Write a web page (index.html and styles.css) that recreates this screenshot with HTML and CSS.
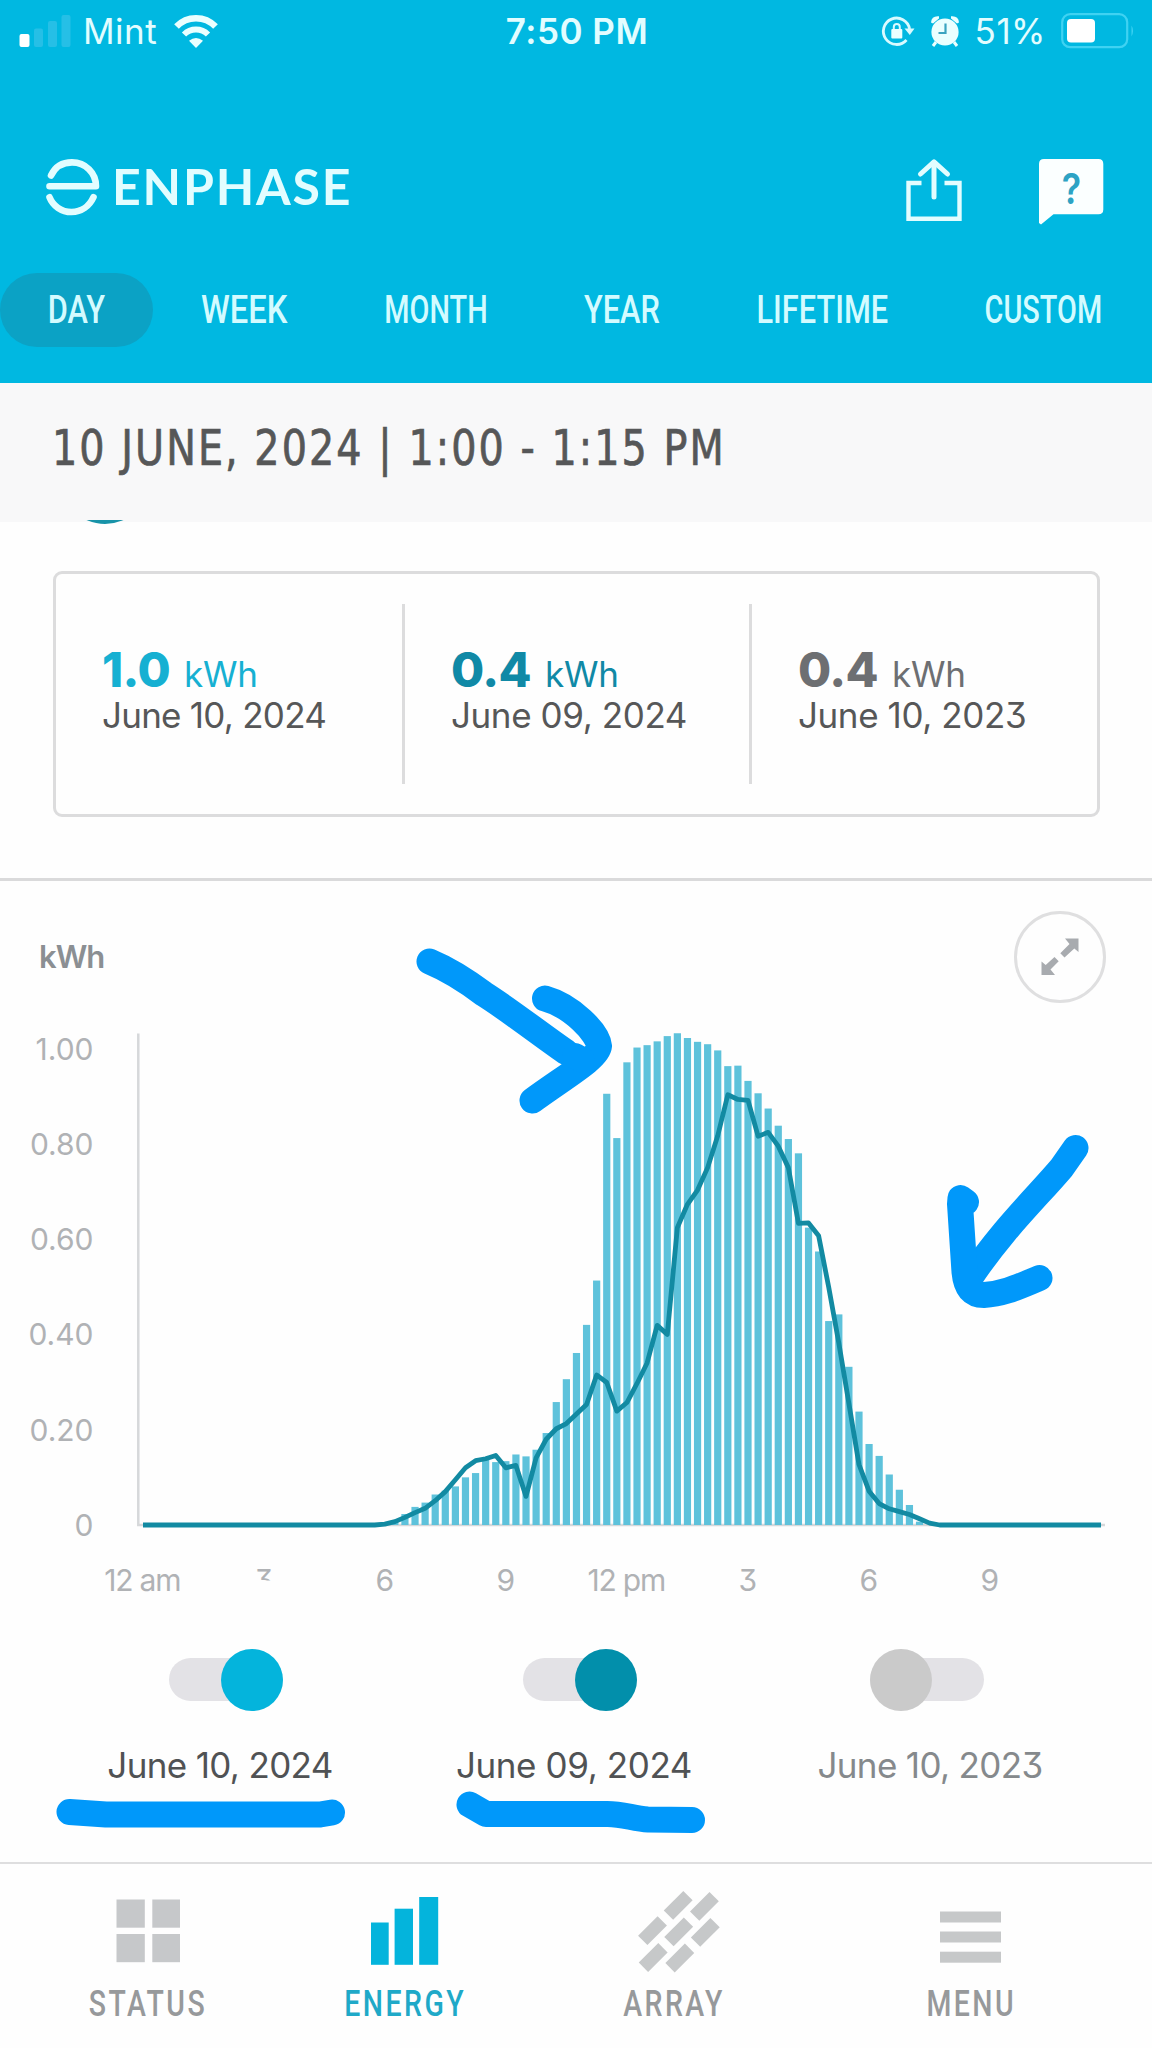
FILE: index.html
```html
<!DOCTYPE html>
<html lang="en">
<head>
    <meta charset="UTF-8">
    <title>Enphase Energy</title>
    <link rel="stylesheet" href="styles.css">
</head>
<body>
    <!-- Header -->
    <header class="header">
        <div class="status-bar">
            <div class="status-left">
                <svg class="signal" width="52" height="34" viewBox="0 0 52 34">
                    <rect x="0.5" y="20" width="10" height="13" rx="2" fill="#fff"/>
                    <rect x="15" y="14.5" width="9" height="18.5" rx="2" fill="#26bfe6"/>
                    <rect x="29" y="7" width="9" height="26" rx="2" fill="#26bfe6"/>
                    <rect x="42.5" y="1" width="9" height="32" rx="2" fill="#26bfe6"/>
                </svg>
                <span class="carrier">Mint</span>
                <svg class="wifi" width="46" height="36" viewBox="0 0 46 36">
                    <path d="M3.5 13.5 A27 27 0 0 1 42.5 13.5" fill="none" stroke="#eaffff" stroke-width="6.5"/>
                    <path d="M11 21.5 A17 17 0 0 1 35 21.5" fill="none" stroke="#eaffff" stroke-width="6"/>
                    <path d="M23 35 L16 27.8 Q23 22 30 27.8 Z" fill="#eaffff"/>
                </svg>
            </div>
            <span class="time">7:50 PM</span>
            <div class="status-right">
                <svg width="33" height="32" viewBox="0 0 33 32">
                    <path d="M24.5 25 A13.2 13.2 0 1 1 27.6 14" fill="none" stroke="#d8faff" stroke-width="2.8"/>
                    <path d="M22.5 13.5 H32.5 L27.8 20 Z" fill="#d8faff"/>
                    <rect x="9.3" y="14" width="11" height="9.5" rx="1" fill="#eaffff"/>
                    <path d="M11.8 14 V12 A3 3 0 0 1 17.8 12 V14" fill="none" stroke="#d8faff" stroke-width="2"/>
                </svg>
                <svg class="alarm" width="30" height="32" viewBox="0 0 30 32">
                    <circle cx="15" cy="17" r="13.6" fill="#eaffff"/>
                    <path d="M1 7.5 Q1.5 0.5 9 1.2 L9 3.5 L3 8.5 Z" fill="#eaffff"/>
                    <path d="M29 7.5 Q28.5 0.5 21 1.2 L21 3.5 L27 8.5 Z" fill="#eaffff"/>
                    <path d="M6 27 L3 31 M24 27 L27 31" stroke="#eaffff" stroke-width="3"/>
                    <path d="M15.5 8.5 V18 H8.5" fill="none" stroke="#3ba4c0" stroke-width="2.2"/>
                </svg>
                <span class="percent">51%</span>
                <svg width="74" height="36" viewBox="0 0 74 36">
                    <rect x="1.2" y="1.2" width="65" height="33" rx="8" fill="none" stroke="#3fd2f2" stroke-width="2.2"/>
                    <rect x="6" y="6" width="28" height="23.5" rx="4" fill="#fff"/>
                    <path d="M70.5 12.5 Q73.5 17.5 70.5 23.5 Z" fill="#3fd2f2"/>
                </svg>
            </div>
        </div>

        <div class="brand-row">
            <svg width="56" height="58" viewBox="0 0 56 58">
                <g fill="none" stroke="#e2fdff" stroke-width="6.6" stroke-linecap="round" stroke-linejoin="round">
                    <path d="M6 16.5 C10 8 17.5 3.4 27 3.4 C40.5 3.4 51 14 51 27.2 H4.5"/>
                    <path d="M4.5 38.2 C8 47 16.5 53 26.5 53 C36.5 53 44.5 47 48.5 38.2"/>
                </g>
            </svg>
            <span class="brand-name">ENPHASE</span>
            <svg class="share" width="56" height="64" viewBox="0 0 56 64">
                <g fill="none" stroke="#e2fdff" stroke-width="4.4">
                    <path d="M15.5 24 H2.5 V59.7 H53.5 V24 H38.5"/>
                    <path d="M28 4 V38" stroke-linecap="round" stroke-width="5"/>
                    <path d="M14.5 15 L28 2.8 L41.5 15" stroke-linecap="round" stroke-linejoin="round" stroke-width="5"/>
                </g>
            </svg>
            <div class="help">
                <svg width="65" height="66" viewBox="0 0 65 66">
                    <path d="M5 0 H59.5 Q64.3 0 64.3 5 V50.5 Q64.3 55.3 59.5 55.3 H14.5 L2 65.5 L0 64 V5 Q0 0 5 0 Z" fill="#fbffff"/>
                </svg>
                <span class="help-mark">?</span>
            </div>
        </div>

        <nav class="tabs">
            <a class="tab active"><span>DAY</span></a>
            <a class="tab wide"><span>WEEK</span></a>
            <a class="tab narrow"><span>MONTH</span></a>
            <a class="tab"><span>YEAR</span></a>
            <a class="tab"><span>LIFETIME</span></a>
            <a class="tab narrow"><span>CUSTOM</span></a>
        </nav>
    </header>

    <div class="period"><span>10 JUNE, 2024 | 1:00 - 1:15 PM</span></div>

    <!-- Scrolled content, the badge is cut off by the period bar -->
    <div class="badge-strip"><div class="badge"></div></div>

    <!-- Totals -->
    <div class="totals">
        <div class="total">
            <div class="value today"><b>1.0</b><span>kWh</span></div>
            <div class="date">June 10, 2024</div>
        </div>
        <div class="total">
            <div class="value yesterday"><b>0.4</b><span>kWh</span></div>
            <div class="date">June 09, 2024</div>
        </div>
        <div class="total">
            <div class="value last-year"><b>0.4</b><span>kWh</span></div>
            <div class="date">June 10, 2023</div>
        </div>
    </div>

    <!-- Chart -->
    <main class="chart-section">
        <div class="chart-head">
            <span class="unit">kWh</span>
            <div class="expand">
                <svg width="40" height="40" viewBox="0 0 40 40" fill="#a8abaf">
                    <path d="M25 1.5 H38.5 V15 L34.3 11.5 L24.5 20.5 L20.3 16.3 L29.5 7 Z"/>
                    <path d="M15 38 H1.5 V24.5 L5.7 28 L14.5 20 L18.7 24.2 L10.5 32.5 Z"/>
                </svg>
            </div>
        </div>
        <svg id="chart" width="1152" height="620" viewBox="0 0 1152 620">
            <defs>
                <clipPath id="labelClip"><rect x="250" y="560" width="30" height="18.5"/></clipPath>
            </defs>
        </svg>

        <!-- Series toggles -->
        <div class="series">
            <div class="toggle on">
                <div class="switch"><i></i></div>
                <label>June 10, 2024</label>
            </div>
            <div class="toggle on dark">
                <div class="switch"><i></i></div>
                <label>June 09, 2024</label>
            </div>
            <div class="toggle off">
                <div class="switch"><i></i></div>
                <label>June 10, 2023</label>
            </div>
        </div>
    </main>

    <!-- Bottom Navigation -->
    <nav class="bottom-nav">
        <a>
            <svg width="64" height="64" viewBox="0 0 64 64" fill="#c6c8ca">
                <rect x="0.5" y="0.5" width="28.3" height="28.2"/>
                <rect x="36.3" y="0.5" width="27.7" height="28.2"/>
                <rect x="0.5" y="35" width="28.3" height="28.2"/>
                <rect x="36.3" y="35" width="27.7" height="28.2"/>
            </svg>
            <span>STATUS</span>
        </a>
        <a class="current">
            <svg class="energy-icon" width="68" height="68" viewBox="0 0 68 68" fill="#04b4dc">
                <rect x="0" y="25.5" width="17.7" height="42.3"/>
                <rect x="23.6" y="11.7" width="18.4" height="56.1"/>
                <rect x="48.2" y="0" width="19" height="67.8"/>
            </svg>
            <span>ENERGY</span>
        </a>
        <a>
            <svg class="array-icon" width="84" height="84" viewBox="0 0 84 84" fill="#c6c8c9">
                <g transform="translate(46.2 15.3) rotate(-45)"><rect x="-13.8" y="-6.6" width="27.6" height="13.2"/></g>
                <g transform="translate(72.4 16.3) rotate(-45)"><rect x="-13.8" y="-6.6" width="27.6" height="13.2"/></g>
                <g transform="translate(20.5 40.6) rotate(-45)"><rect x="-13.8" y="-6.6" width="27.6" height="13.2"/></g>
                <g transform="translate(46.7 41.9) rotate(-45)"><rect x="-13.8" y="-6.6" width="27.6" height="13.2"/></g>
                <g transform="translate(73.3 42.4) rotate(-45)"><rect x="-13.8" y="-6.6" width="27.6" height="13.2"/></g>
                <g transform="translate(21.2 67.5) rotate(-45)"><rect x="-13.8" y="-6.6" width="27.6" height="13.2"/></g>
                <g transform="translate(47.8 68) rotate(-45)"><rect x="-13.8" y="-6.6" width="27.6" height="13.2"/></g>
            </svg>
            <span>ARRAY</span>
        </a>
        <a>
            <svg class="menu-icon" width="62" height="52" viewBox="0 0 62 52" fill="#c6c8c9">
                <rect x="0" y="0.5" width="61" height="11"/>
                <rect x="0" y="20.5" width="61" height="11"/>
                <rect x="0" y="40.7" width="61" height="11"/>
            </svg>
            <span>MENU</span>
        </a>
    </nav>

    <!-- Hand drawn marks over the screen -->
    <svg class="marks" width="1152" height="2048" viewBox="0 0 1152 2048">
        <path d="M429.5 961.5 C450 970 468 982 484 994 C508 1009 540 1034 566 1052"/>
        <path d="M545 998.5 C572 1006 598 1033 599 1046 C598 1058 566 1076 532.5 1100.5"/>
        <path d="M575 1056 L582 1060"/>
        <path d="M1075.5 1148 L1061.5 1168 C1036 1198 1002 1230 970 1278"/>
        <path d="M966 1202 L960.5 1198 L960 1204 L964.5 1272 C966 1288 972 1295 984 1295 C1004 1294 1020 1286 1039.5 1278"/>
        <path d="M69.5 1812 L106 1814.5 H320 L332 1812.5"/>
        <path d="M469.5 1804.5 L486 1814 H606 C622 1813.5 634 1819 648 1819.5 L692 1820"/>
    </svg>

    <script>
        // kWh per 15 minutes, first entry of each list starts at slot 24 (6:00 am)
        const firstSlot = 24;
        const production = [
            0.002, 0.010, 0.023, 0.038, 0.047, 0.064, 0.072, 0.081, 0.100, 0.109,
            0.137, 0.132, 0.134, 0.148, 0.144, 0.158, 0.193, 0.258, 0.306, 0.361,
            0.420, 0.513, 0.905, 0.812, 0.971, 1.002, 1.007, 1.015, 1.026, 1.032,
            1.022, 1.014, 1.009, 0.996, 0.963, 0.964, 0.932, 0.906, 0.874, 0.838,
            0.810, 0.780, 0.624, 0.574, 0.428, 0.442, 0.332, 0.238, 0.170, 0.145,
            0.106, 0.074, 0.042, 0.007
        ];
        const previous = [
            0.002, 0.007, 0.016, 0.026, 0.035, 0.051, 0.070, 0.095, 0.120, 0.135,
            0.139, 0.146, 0.120, 0.125, 0.060, 0.141, 0.180, 0.202, 0.213, 0.233,
            0.253, 0.315, 0.299, 0.239, 0.257, 0.297, 0.340, 0.419, 0.400, 0.624,
            0.673, 0.703, 0.750, 0.817, 0.903, 0.893, 0.891, 0.816, 0.824, 0.795,
            0.750, 0.633, 0.634, 0.607, 0.499, 0.382, 0.255, 0.127, 0.071, 0.045,
            0.034, 0.028, 0.022, 0.013, 0.004
        ];

        const chart = document.querySelector('#chart');
        const baseY = 523;
        const scale = 476.5;
        const slotX = slot => 142.6 + slot * 10.09;

        function add(tag, attrs, text) {
            const el = document.createElementNS('http://www.w3.org/2000/svg', tag);
            Object.entries(attrs).forEach(([key, value]) => el.setAttribute(key, value));
            if (text) el.textContent = text;
            chart.appendChild(el);
        }

        // Axes
        add('path', { class: 'axis', d: `M138.3 31.5 V${baseY} H1105` });
        ['0', '0.20', '0.40', '0.60', '0.80', '1.00'].forEach((label, i) => {
            add('text', { class: 'tick', x: 93.5, y: baseY + 11 - i * 95.3, 'text-anchor': 'end' }, label);
        });
        ['12 am', '3', '6', '9', '12 pm', '3', '6', '9'].forEach((label, i) => {
            const attrs = { class: 'tick time-tick', x: 142.2 + i * 121.0, y: 589, 'text-anchor': 'middle' };
            if (i === 1) attrs['clip-path'] = 'url(#labelClip)';
            add('text', attrs, label);
        });

        // Bars
        production.forEach((value, i) => {
            add('rect', {
                class: 'bar',
                x: slotX(firstSlot + i) - 3.6,
                y: baseY - value * scale,
                width: 7.2,
                height: value * scale
            });
        });

        // Line
        const points = previous.map((value, i) => `${slotX(firstSlot + i)},${baseY - value * scale}`);
        points.unshift(`143,${baseY}`, `${slotX(firstSlot - 1)},${baseY}`);
        points.push(`${slotX(79)},${baseY}`, `1101,${baseY}`);
        add('polyline', { class: 'line', points: points.join(' ') });
    </script>
</body>
</html>
```
FILE: styles.css
```css
* {
    box-sizing: border-box;
}

body {
    margin: 0;
    width: 1152px;
    height: 2048px;
    position: relative;
    overflow: hidden;
    background-color: #fefefe;
    font-family: Inter, "Liberation Sans", sans-serif;
    font-feature-settings: "cv09";
    color: #565758;
}

svg {
    display: block;
    flex: none;
    overflow: visible;
}

/* Header */
.header {
    height: 383px;
    background-color: #00b8e1;
    color: #e2fdff;
}

.status-bar {
    height: 62px;
    padding: 0 17px 0 19px;
    display: grid;
    grid-template-columns: 1fr auto 1fr;
    align-items: center;
    font-size: 35px;
    line-height: 62px;
}

.status-left,
.status-right {
    display: flex;
    align-items: center;
}

.status-right {
    justify-content: flex-end;
}

.carrier {
    margin-left: 12px;
    width: 90px;
    letter-spacing: 0.5px;
}

.time {
    font-weight: 600;
    letter-spacing: 0.5px;
}

.alarm {
    margin-left: 15px;
}

.percent {
    margin-left: 15px;
    margin-right: 15px;
    letter-spacing: 0.5px;
}

.brand-row {
    height: 211px;
    padding: 97px 48px 0 45px;
    display: flex;
    align-items: flex-start;
}

.brand-name {
    margin-left: 11px;
    margin-right: auto;
    font-family: Lato, sans-serif;
    font-weight: 700;
    font-size: 50px;
    line-height: 54px;
    letter-spacing: 1.8px;
}

.help {
    position: relative;
    margin-left: 77px;
}

.help-mark {
    position: absolute;
    top: 3px;
    left: 0;
    width: 65px;
    text-align: center;
    font-weight: 600;
    font-size: 42px;
    line-height: 53px;
    color: #2da3c4;
    transform: scaleX(0.85);
}

.tabs {
    display: grid;
    grid-template-columns: 153px 183px 199px 174px 226px 216px;
    height: 74px;
}

.tab {
    text-align: center;
    font-family: Roboto, sans-serif;
    font-weight: 500;
    font-size: 38px;
    line-height: 74px;
    color: #d3fbff;
}

.tab span {
    display: inline-block;
    transform: scaleX(0.81);
}

.tab.wide span {
    transform: scaleX(0.86);
}

.tab.narrow span {
    transform: scaleX(0.76);
}

.tab.active {
    background-color: #0ba2c5;
    border-radius: 37px;
}

.period {
    height: 139px;
    padding-left: 52px;
    background-color: #f8f8f9;
    font-family: "DejaVu Sans Condensed", "DejaVu Sans", sans-serif;
    font-size: 49px;
    line-height: 131px;
    letter-spacing: 2.3px;
    white-space: nowrap;
    -webkit-text-stroke: 0.7px #565758;
}

.period span {
    display: inline-block;
    transform: scaleX(0.9);
    transform-origin: left;
}

.badge-strip {
    position: relative;
    height: 51px;
    margin-top: -2px;
    overflow: hidden;
}

.badge {
    width: 90px;
    height: 90px;
    margin: -86.5px 0 0 59.5px;
    border-radius: 50%;
    background-color: #1893a8;
}

/* Totals */
.totals {
    width: 1047px;
    height: 246px;
    margin-left: 53px;
    display: grid;
    grid-template-columns: 349px 347px 1fr;
    border: 3px solid #dcdcdd;
    border-radius: 9px;
    padding: 30px 0;
}

.total {
    padding: 0 0 10px 46px;
    display: flex;
    flex-direction: column;
    justify-content: center;
    border-right: 3px solid #dcdcdd;
}

.total:last-child {
    border-right: none;
}

.value {
    display: flex;
    align-items: baseline;
    gap: 14px;
    line-height: 48px;
    font-size: 35px;
    letter-spacing: -0.2px;
}

.value b {
    font-size: 48px;
    font-weight: 800;
    letter-spacing: -0.6px;
}

.today {
    color: #16b0d2;
}

.yesterday {
    color: #1089a6;
}

.last-year {
    color: #6d6f72;
}

.date {
    font-size: 35px;
    line-height: 34px;
    letter-spacing: -0.75px;
}

.total + .total .date {
    letter-spacing: -0.4px;
}

/* Chart */
.chart-section {
    margin-top: 61px;
    height: 984px;
    border-top: 3px solid #dadadb;
    padding-top: 30px;
}

.chart-head {
    height: 91px;
    padding: 0 46px 0 39px;
    display: flex;
    justify-content: space-between;
    align-items: center;
}

.unit {
    font-size: 31px;
    font-weight: 600;
    letter-spacing: -1px;
    color: #8b8f93;
}

.expand {
    width: 92px;
    height: 92px;
    border: 3px solid #dfdfe0;
    border-radius: 50%;
    display: flex;
    align-items: center;
    justify-content: center;
}

.axis {
    fill: none;
    stroke: #d6d8da;
    stroke-width: 2.5px;
}

.tick {
    font-size: 30px;
    fill: #b0b2b5;
}

.time-tick {
    letter-spacing: -1.2px;
}

.bar {
    fill: #5ec2db;
}

.line {
    fill: none;
    stroke: #128aa2;
    stroke-width: 4.8px;
    stroke-linejoin: round;
}

.series {
    display: grid;
    grid-template-columns: 440px 268px 444px;
    margin-top: 27px;
}

.toggle {
    display: flex;
    flex-direction: column;
    align-items: center;
    font-size: 35px;
    line-height: 40px;
    letter-spacing: -0.65px;
    color: #505254;
}

.switch {
    position: relative;
    width: 114px;
    height: 62px;
    margin-bottom: 34px;
    display: flex;
}

.switch::before {
    content: "";
    position: absolute;
    top: 9px;
    left: 0;
    width: 114px;
    height: 43px;
    border-radius: 22px;
    background-color: #e3e2e6;
}

.switch i {
    position: relative;
    width: 62px;
    height: 62px;
    border-radius: 50%;
    background-color: #cacaca;
}

.on .switch {
    justify-content: flex-end;
    margin-left: 11px;
}

.off .switch {
    margin-right: 7px;
}

.on .switch i {
    background-color: #04b4dc;
}

.dark {
    letter-spacing: -0.4px;
}

.dark .switch i {
    background-color: #028fab;
}

.off {
    color: #85898c;
}

/* Bottom Navigation */
.bottom-nav {
    height: 186px;
    border-top: 2px solid #dededf;
    display: grid;
    grid-template-columns: 296px 218px 320px 274px;
    font-family: Roboto, sans-serif;
    font-weight: 500;
    font-size: 37px;
    line-height: 40px;
    letter-spacing: 3.2px;
    color: #97999b;
}

.bottom-nav a {
    display: flex;
    flex-direction: column;
    align-items: center;
    justify-content: flex-end;
    padding-bottom: 24px;
}

.bottom-nav svg {
    margin-bottom: 21px;
}

.bottom-nav .energy-icon {
    margin-bottom: 19px;
}

.bottom-nav .array-icon {
    margin-bottom: 10px;
}

.bottom-nav span {
    transform: scaleX(0.77);
}

.bottom-nav .current {
    color: #1fa9c8;
}

.marks {
    position: absolute;
    top: 0;
    left: 0;
    fill: none;
    stroke: #0098fa;
    stroke-width: 26px;
    stroke-linecap: round;
    stroke-linejoin: round;
}
```
